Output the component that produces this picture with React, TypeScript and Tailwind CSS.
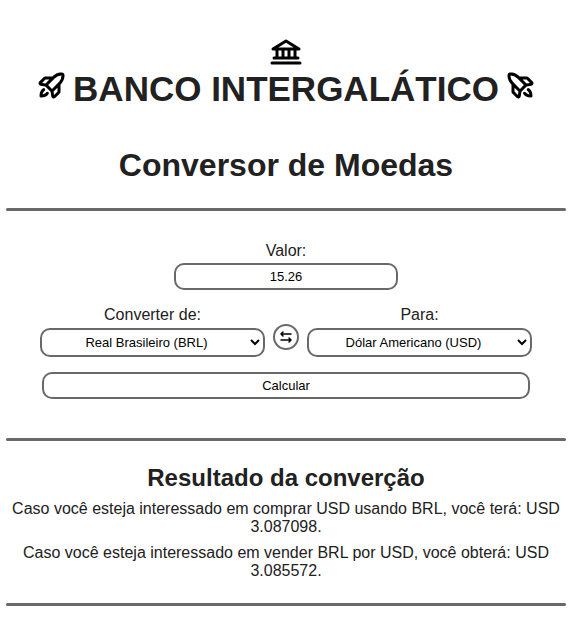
import { useState } from "react";
import { PiArrowsLeftRightBold, PiBankBold, PiRocketLaunchBold } from "react-icons/pi";

const currencies = [
  { code: "BRL", name: "Real Brasileiro" },
  { code: "USD", name: "Dólar Americano" },
  { code: "EUR", name: "Euro" },
];

const field = "rounded-[10px] border-2 border-[#696969] bg-white text-center text-[13px] text-black";

function Divider() {
  return <hr className="h-[3px] w-full rounded-xs border-0 bg-[#696969]" />;
}

type CurrencyProps = {
  id: string;
  label: string;
  value: string;
  onChange: (code: string) => void;
};

function CurrencySelect({ id, label, value, onChange }: CurrencyProps) {
  return (
    <div className="flex max-w-[225px] flex-1 flex-col gap-1 text-center">
      <label htmlFor={id}>{label}</label>
      <select
        id={id}
        value={value}
        onChange={(e) => onChange(e.target.value)}
        className={`h-[29px] w-full ${field}`}
      >
        {currencies.map((c) => (
          <option key={c.code} value={c.code}>
            {c.name} ({c.code})
          </option>
        ))}
      </select>
    </div>
  );
}

export default function App() {
  const [amount, setAmount] = useState("15.26");
  const [from, setFrom] = useState("BRL");
  const [to, setTo] = useState("USD");

  const swap = () => {
    setFrom(to);
    setTo(from);
  };

  return (
    <main className="pt-[37px] pr-[5px] pb-9 pl-1.5 font-['Liberation_Sans',Arial,sans-serif] text-base leading-[18px] text-[#212121]">
      <header className="flex flex-col items-center text-center">
        <PiBankBold className="size-8 text-black" />
        <h1 className="flex items-start justify-center gap-[5px] text-[35px] leading-10 font-bold">
          <PiRocketLaunchBold className="size-8 shrink-0 text-black" />
          BANCO INTERGALÁTICO
          <PiRocketLaunchBold className="size-8 shrink-0 -scale-x-100 text-black" />
        </h1>
        <h2 className="mt-[38px] mb-[25px] text-[32px] leading-9 font-bold">Conversor de Moedas</h2>
      </header>
      <Divider />
      <form className="flex flex-col items-center pt-[31px] pb-[39px]" onSubmit={(e) => e.preventDefault()}>
        <label htmlFor="amount">Valor:</label>
        <input
          id="amount"
          value={amount}
          onChange={(e) => setAmount(e.target.value)}
          className={`mt-[3px] h-[27px] w-2/5 ${field}`}
        />
        <div className="mt-4 flex w-full items-center justify-center gap-2">
          <CurrencySelect id="from" label="Converter de:" value={from} onChange={setFrom} />
          <button
            type="button"
            aria-label="Inverter moedas"
            onClick={swap}
            className="mt-2.5 flex size-[26px] shrink-0 items-center justify-center rounded-full border-2 border-[#696969] text-black"
          >
            <PiArrowsLeftRightBold className="size-4" />
          </button>
          <CurrencySelect id="to" label="Para:" value={to} onChange={setTo} />
        </div>
        <button type="submit" className={`mt-[15px] h-[27px] w-full max-w-[488px] ${field}`}>
          Calcular
        </button>
      </form>
      <Divider />
      <section className="flex flex-col gap-2 pt-[23px] pb-[23px] text-center">
        <h2 className="text-2xl leading-7 font-bold">Resultado da converção</h2>
        <p>Caso você esteja interessado em comprar USD usando BRL, você terá: USD 3.087098.</p>
        <p>Caso você esteja interessado em vender BRL por USD, você obterá: USD 3.085572.</p>
      </section>
      <Divider />
    </main>
  );
}
